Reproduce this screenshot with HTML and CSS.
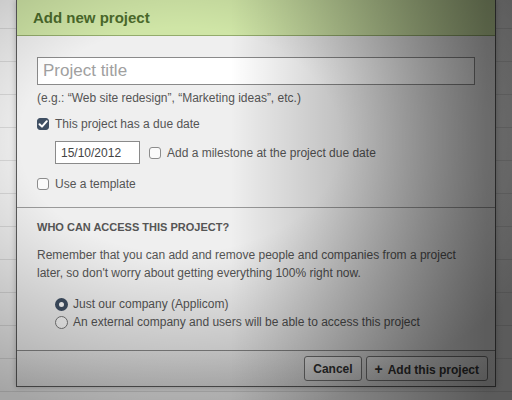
FILE: index.html
```html
<!DOCTYPE html>
<html lang="en">
<head>
    <meta charset="UTF-8">
    <meta name="viewport" content="width=device-width, initial-scale=1.0">
    <title>Add new project</title>
    <link rel="stylesheet" href="styles.css">
</head>
<body>
    <div class="page">
        <div class="dialog">
            <div class="dialog-header">
                <h1>Add new project</h1>
            </div>
            <div class="dialog-body">
                <input type="text" class="title-input" placeholder="Project title">
                <p class="hint">(e.g.: “Web site redesign”, “Marketing ideas”, etc.)</p>
                <label class="check-row">
                    <span class="box checked">
                        <svg width="12" height="12" viewBox="0 0 12 12"><path d="M2.5 6.2 L5 8.6 L9.8 3.2" fill="none" stroke="#fff" stroke-width="2" stroke-linecap="round" stroke-linejoin="round"/></svg>
                    </span>
                    This project has a due date
                </label>
                <div class="date-row">
                    <input type="text" class="date-input" value="15/10/2012">
                    <label class="check-row">
                        <span class="box"></span>
                        Add a milestone at the project due date
                    </label>
                </div>
                <label class="check-row">
                    <span class="box"></span>
                    Use a template
                </label>
            </div>
            <div class="dialog-access">
                <h2>Who can access this project?</h2>
                <p>Remember that you can add and remove people and companies from a project later, so don't worry about getting everything 100% right now.</p>
                <div class="radios">
                    <label class="radio-row"><span class="radio on"></span>Just our company (Applicom)</label>
                    <label class="radio-row"><span class="radio"></span>An external company and users will be able to access this project</label>
                </div>
            </div>
            <div class="dialog-footer">
                <button class="btn">Cancel</button>
                <button class="btn"><span class="plus">+</span> Add this project</button>
            </div>
        </div>
    </div>
    <!-- lighting over the whole picture -->
    <div class="light"></div>
</body>
</html>
```

FILE: styles.css
```css
body {
    margin: 0;
    padding: 0;
    font-family: "Liberation Sans", Arial, sans-serif;
    color: #555;
    position: relative;
    height: 400px;
    overflow: hidden;
}
.page {
    height: 400px;
    background-color: #ececec;
    background-image: repeating-linear-gradient(to bottom, transparent 0, transparent 30px, #d4d4d4 30px, #d4d4d4 31px, transparent 31px, transparent 33px);
    background-position: 0 -2px;
}
.dialog {
    margin-left: 16px;
    width: 478px;
    border: 1px solid #5a5a5a;
    border-top: none;
    background: #efefef;
    box-shadow: 0 0 6px rgba(0,0,0,0.25);
}
.dialog-header {
    height: 35px;
    background: #cfe5a6;
    border-bottom: 1px solid #93ab6c;
    padding-left: 16px;
    display: flex;
    align-items: center;
}
h1 {
    margin: 0;
    font-size: 15px;
    font-weight: bold;
    color: #4b6a2b;
}
.dialog-body {
    padding: 21px 20px 15px 20px;
    border-bottom: 1px solid #9a9a9a;
}
.title-input {
    display: block;
    box-sizing: border-box;
    width: 438px;
    height: 28px;
    margin: 0;
    padding: 0 5px;
    border: 1px solid #8a8a8a;
    background: #fff;
    font-family: inherit;
    font-size: 17px;
    color: #333;
}
.title-input::placeholder {
    color: #a0a0a0;
}
.hint {
    margin: 5px 0 0 0;
    font-size: 12px;
    line-height: 16px;
}
.check-row {
    display: flex;
    align-items: center;
    font-size: 12px;
    line-height: 16px;
    gap: 6px;
    margin-top: 10px;
}
.box {
    box-sizing: border-box;
    width: 12px;
    height: 12px;
    border: 1px solid #8c8c8c;
    border-radius: 3px;
    background: #fafafa;
    display: flex;
}
.box.checked {
    background: #3f4f63;
    border-color: #3f4f63;
}
.box svg {
    margin: -1px;
}
.date-row {
    display: flex;
    align-items: center;
    margin: 9px 0 0 18px;
    gap: 9px;
}
.date-row .check-row {
    margin-top: 0;
}
.date-input {
    box-sizing: border-box;
    width: 85px;
    height: 23px;
    margin: 0;
    padding: 0 5px;
    border: 1px solid #8a8a8a;
    background: #fff;
    font-family: inherit;
    font-size: 12px;
    color: #444;
}
.date-row + .check-row {
    margin-top: 12px;
}
.dialog-access {
    padding: 13px 20px 19px 20px;
    border-bottom: 1px solid #888;
}
h2 {
    margin: 0;
    font-size: 11px;
    font-weight: bold;
    text-transform: uppercase;
    color: #555;
}
.dialog-access p {
    margin: 13px 0 0 0;
    font-size: 12px;
    line-height: 18px;
}
.radios {
    margin: 13px 0 0 18px;
}
.radio-row {
    display: flex;
    align-items: center;
    gap: 5px;
    font-size: 12px;
    line-height: 18px;
}
.radio {
    box-sizing: border-box;
    width: 13px;
    height: 13px;
    border: 1px solid #777;
    border-radius: 50%;
    background: #fafafa;
}
.radio.on {
    background: #fff;
    border: 4px solid #3f4f63;
}
.dialog-footer {
    display: flex;
    justify-content: flex-end;
    gap: 4px;
    padding: 5px 7px 5px 0;
    background: linear-gradient(#e8e8e8, #dcdcdc);
}
.btn {
    height: 25px;
    padding: 0 8px;
    border: 1px solid #777;
    border-radius: 3px;
    background: linear-gradient(#f6f6f6, #e2e2e2);
    font-family: inherit;
    font-size: 12px;
    font-weight: bold;
    color: #333;
    cursor: pointer;
}
.plus {
    font-size: 14px;
    margin-right: 2px;
}
.light {
    position: absolute;
    left: 0;
    top: 0;
    right: 0;
    bottom: 0;
    pointer-events: none;
    background:
        linear-gradient(to right, rgba(0,0,0,0) 0%, rgba(0,0,0,0) 45%, rgba(0,0,0,0.45) 95%, rgba(0,0,0,0.45) 100%),
        radial-gradient(ellipse 400px 280px at 180px 140px, rgba(0,0,0,0) 40%, rgba(0,0,0,0.3) 100%);
}
```
